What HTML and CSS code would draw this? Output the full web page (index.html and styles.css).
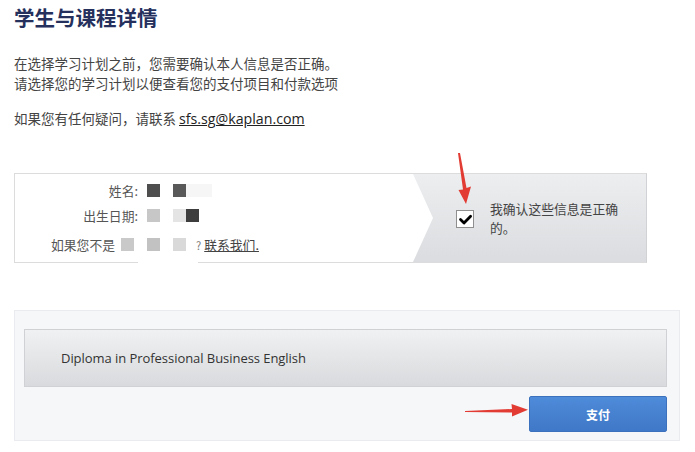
FILE: index.html
```html
<!DOCTYPE html>
<html lang="zh">
<head>
<meta charset="utf-8">
<title>学生与课程详情</title>
<link rel="stylesheet" href="styles.css">
</head>
<body>
<div class="page">
  <h1 class="title">学生与课程详情</h1>
  <p class="intro">在选择学习计划之前，您需要确认本人信息是否正确。<br>请选择您的学习计划以便查看您的支付项目和付款选项</p>
  <p class="contact">如果您有任何疑问，请联系 <a class="email" href="#">sfs.sg@kaplan.com</a></p>

  <div class="info">
    <div class="info-left">
      <div class="row">
        <span class="label">姓名:</span>
        <span class="blur">
          <i class="sq d1"></i><i class="sq"></i><i class="sq d2"></i><i class="sq f1"></i><i class="sq f1"></i>
        </span>
      </div>
      <div class="row">
        <span class="label">出生日期:</span>
        <span class="blur">
          <i class="sq l1"></i><i class="sq"></i><i class="sq f2"></i><i class="sq d3"></i>
        </span>
      </div>
      <div class="row row-note">
        <span>如果您不是</span>
        <span class="blur blur-note">
          <i class="sq l2"></i><i class="sq"></i><i class="sq l3"></i><i class="sq"></i><i class="sq l4"></i>
        </span>
        <span class="q">?</span>
        <a class="us" href="#">联系我们.</a>
      </div>
      <span class="smudge"></span>
    </div>
    <div class="info-right">
      <span class="checkbox">
        <svg width="15" height="15" viewBox="0 0 15 15"><path d="M2.5 7.6 L6 11 L12.6 4.2" fill="none" stroke="#000" stroke-width="2.8" stroke-linecap="round" stroke-linejoin="round"/></svg>
      </span>
      <span class="confirm">我确认这些信息是正确<br>的。</span>
    </div>
  </div>

  <div class="panel">
    <div class="course">Diploma in Professional Business English</div>
    <button class="pay" type="button">支付</button>
  </div>

  <svg class="arrow arrow-down" width="20" height="56" viewBox="0 0 20 56">
    <path d="M3 1 L5 1 L11.5 36 L16 34.5 L11 52 L3.5 38 L8 37.5 Z" fill="#e23b33"/>
  </svg>
  <svg class="arrow arrow-right" width="70" height="20" viewBox="0 0 70 20">
    <path d="M1 11 L48 9 L47.5 4 L64 9.8 L48 16.5 L48 12.5 L1 12 Z" fill="#e23b33"/>
  </svg>
</div>
</body>
</html>
```

FILE: styles.css
```css
html, body {
  margin: 0;
  padding: 0;
  background: #ffffff;
}

.page {
  position: relative;
  width: 695px;
  height: 452px;
  overflow: hidden;
  font-family: "Noto Sans CJK SC", "Noto Sans", sans-serif;
  color: #444;
}

.title {
  margin: 0;
  padding: 4px 0 0 14px;
  font-size: 20.5px;
  line-height: 26px;
  font-weight: 700;
  color: #25305d;
}

.intro {
  margin: 23px 0 0 14px;
  font-size: 13.5px;
  line-height: 20px;
  color: #444;
}

.contact {
  margin: 15px 0 0 14px;
  font-size: 13.5px;
  line-height: 20px;
  color: #444;
}

.email {
  font-family: "Open Sans", "Noto Sans", sans-serif;
  font-size: 14.2px;
  color: #222;
  text-decoration: underline;
}

.info {
  display: flex;
  margin: 44px 0 0 14px;
  width: 631px;
  height: 88px;
  border: 1px solid #dcdcdc;
  border-right-color: #d0d2d5;
}

.info-left {
  position: relative;
  z-index: 1;
  flex: 0 0 398px;
  background: #fff;
  padding-top: 4px;
  box-sizing: border-box;
  font-size: 12.8px;
  color: #555;
}

.info-left::after {
  content: "";
  position: absolute;
  top: 0;
  right: -20px;
  width: 20px;
  height: 100%;
  background: #fff;
  clip-path: polygon(0 0, 100% 50%, 0 100%);
}

.row {
  display: flex;
  align-items: center;
  height: 25px;
}

.label {
  width: 123px;
  text-align: right;
  margin-right: 9px;
}

.blur {
  display: flex;
}

.sq {
  display: block;
  width: 13px;
  height: 13px;
}

.d1 { background: #4e4e4e; }
.d2 { background: #595959; }
.d3 { background: #3d3d3d; }
.f1 { background: #f6f6f6; }
.f2 { background: #e4e4e4; }
.l1 { background: #c7c7c7; }
.l2 { background: #c9c9c9; }
.l3 { background: #c2c2c2; }
.l4 { background: #d9d9d9; }

.row-note {
  margin-top: 4px;
  padding-left: 36px;
}

.blur-note {
  margin-left: 6px;
}

.q {
  margin-left: 10px;
  font-size: 11px;
  color: #777;
}

.us {
  margin-left: 3px;
  color: #444;
  text-decoration: underline;
}

.smudge {
  position: absolute;
  left: 123px;
  bottom: -8px;
  width: 60px;
  height: 16px;
  background: #fff;
}

.info-right {
  flex: 1;
  display: flex;
  align-items: center;
  padding-left: 43px;
  background: linear-gradient(#eceef0, #dadcdf);
}

.checkbox {
  display: flex;
  align-items: center;
  justify-content: center;
  width: 16px;
  height: 16px;
  border: 1px solid #8f8f8f;
  background: #fff;
  margin-top: 2px;
}

.confirm {
  margin-left: 16px;
  font-size: 12.8px;
  line-height: 19px;
  color: #444;
}

.panel {
  display: flex;
  flex-direction: column;
  margin: 47px 0 0 14px;
  width: 643px;
  padding: 18px 12px 8px 9px;
  background: #f6f7f9;
  border: 1px solid #e9ebee;
}

.course {
  height: 56px;
  display: flex;
  align-items: center;
  padding-left: 36px;
  border: 1px solid #cfd1d4;
  background: linear-gradient(#f0f1f2, #d8dadd);
  font-family: "Open Sans", "Noto Sans", sans-serif;
  font-size: 13px;
  letter-spacing: -0.05px;
  color: #333;
}

.pay {
  align-self: flex-end;
  margin-top: 9px;
  width: 138px;
  height: 36px;
  border: 1px solid #3c72bd;
  border-radius: 2px;
  background: linear-gradient(#4e8bd9, #3f78c7);
  color: #fff;
  font-family: "Noto Sans CJK SC", sans-serif;
  font-size: 12px;
  font-weight: 700;
}

.arrow {
  position: absolute;
}

.arrow-down {
  left: 455px;
  top: 152px;
}

.arrow-right {
  left: 464px;
  top: 400px;
}
```
